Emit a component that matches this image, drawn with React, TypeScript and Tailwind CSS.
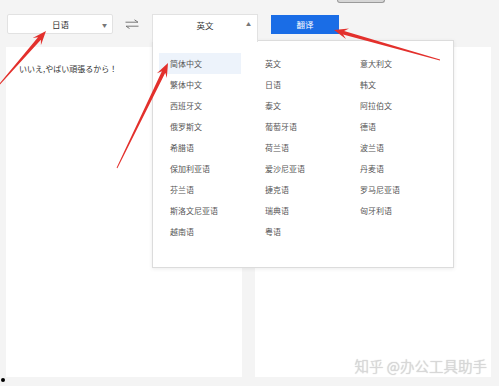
import React from "react";

const col1 = ["简体中文", "繁体中文", "西班牙文", "俄罗斯文", "希腊语", "保加利亚语", "芬兰语", "斯洛文尼亚语", "越南语"];
const col2 = ["英文", "日语", "泰文", "葡萄牙语", "荷兰语", "爱沙尼亚语", "捷克语", "瑞典语", "粤语"];
const col3 = ["意大利文", "韩文", "阿拉伯文", "德语", "波兰语", "丹麦语", "罗马尼亚语", "匈牙利语"];

function arrowPoints(tx: number, ty: number, px: number, py: number) {
  const dx = px - tx;
  const dy = py - ty;
  const len = Math.hypot(dx, dy);
  const ux = dx / len;
  const uy = dy / len;
  const nx = -uy;
  const ny = ux;
  const H = 14;
  const W = 5.5;
  const notch = 4;
  const t0 = 0.4;
  const t1 = 1.9;
  const bx = px - ux * (H - notch);
  const by = py - uy * (H - notch);
  const hx = px - ux * H;
  const hy = py - uy * H;
  const pts: [number, number][] = [
    [tx + nx * t0, ty + ny * t0],
    [bx + nx * t1, by + ny * t1],
    [hx + nx * W, hy + ny * W],
    [px, py],
    [hx - nx * W, hy - ny * W],
    [bx - nx * t1, by - ny * t1],
    [tx - nx * t0, ty - ny * t0],
  ];
  return pts.map((p) => `${p[0].toFixed(1)},${p[1].toFixed(1)}`).join(" ");
}

function Column({ items, highlightFirst }: { items: string[]; highlightFirst?: boolean }) {
  return (
    <div className="flex flex-col w-[95px]">
      {items.map((t, i) => (
        <div
          key={t}
          className={`h-[21px] w-[82px] pl-[11px] flex items-center text-[8px] text-[#555] ${
            highlightFirst && i === 0 ? "bg-[#edf3fb]" : ""
          }`}
        >
          {t}
        </div>
      ))}
    </div>
  );
}

export default function App() {
  return (
    <div className="relative w-[499px] h-[386px] bg-[#f4f4f4] overflow-hidden font-['Noto_Sans_CJK_SC','Noto_Sans',sans-serif]">
      {/* top partial element */}
      <div className="h-[14px]">
        <div className="ml-[337px] w-[48px] h-[3px] bg-[#d6d6d6] border-b border-x border-[#9a9a9a] rounded-b-[3px]" />
      </div>

      {/* toolbar row */}
      <div className="flex items-start h-[27px]">
        <div className="ml-[7px] w-[106px] h-[20px] bg-white border border-[#e2e2e2] rounded-[2px] flex items-center relative">
          <span className="flex-1 text-center text-[8.5px] text-[#333] pl-[1px]">日语</span>
          <span className="absolute right-[5px] top-[6px] text-[5px] text-[#777]">▼</span>
        </div>
        <div className="ml-[12px] w-[14px] h-[20px] flex items-center">
          <svg width="14" height="10" viewBox="0 0 14 10">
            <path d="M0.5 3.2 H13 L9.5 0.8" fill="none" stroke="#777" strokeWidth="1" />
            <path d="M13.5 7.2 H1 L4.5 9.5" fill="none" stroke="#777" strokeWidth="1" />
          </svg>
        </div>
        <div className="ml-[13px] relative z-10 w-[106px] h-[28px] bg-white border-l border-r border-t border-[#e2e2e2]">
          <div className="h-[20px] flex items-center justify-center text-[8.5px] text-[#333]">英文</div>
          <span className="absolute right-[6px] top-[5px] text-[5px] text-[#777]">▲</span>
        </div>
        <div className="ml-[13px] mt-[1px] w-[68px] h-[19px] bg-[#1a6de6] flex items-center justify-center text-[8.5px] text-white">
          翻译
        </div>
      </div>

      {/* panels */}
      <div className="flex mt-[6px]">
        <div className="ml-[6px] w-[236px] h-[330px] bg-white pt-[16px] pl-[13px] text-[8px] text-[#333] font-['Noto_Sans_CJK_JP',sans-serif]">
          いいえ,やばい頑張るから！
        </div>
        <div className="ml-[13px] w-[236px] h-[330px] bg-white relative">
          <div className="absolute right-[4px] bottom-[4px] text-[14.5px] font-light leading-none text-[#dadada] [text-shadow:0_0_1px_#b0b0b0] whitespace-nowrap">
            知乎 @办公工具助手
          </div>
        </div>
      </div>

      {/* dropdown menu */}
      <div className="absolute left-[152px] top-[40px] w-[302px] h-[228px] bg-white border border-[#dcdcdc] shadow-[0_1px_4px_rgba(0,0,0,0.08)] pt-[12px] pl-[6px] flex">
        <Column items={col1} highlightFirst />
        <Column items={col2} />
        <Column items={col3} />
      </div>

      {/* small dot */}
      <div className="absolute left-[1px] top-[378px] w-[4px] h-[4px] rounded-full bg-black" />

      {/* annotation arrows */}
      <svg className="absolute left-0 top-0 pointer-events-none" width="499" height="386" viewBox="0 0 499 386">
        <polygon points={arrowPoints(-2, 86, 46, 31)} fill="#e3302c" />
        <polygon points={arrowPoints(117, 168, 168, 63)} fill="#e3302c" />
        <polygon points={arrowPoints(440, 60, 334, 30)} fill="#e3302c" />
      </svg>
    </div>
  );
}
